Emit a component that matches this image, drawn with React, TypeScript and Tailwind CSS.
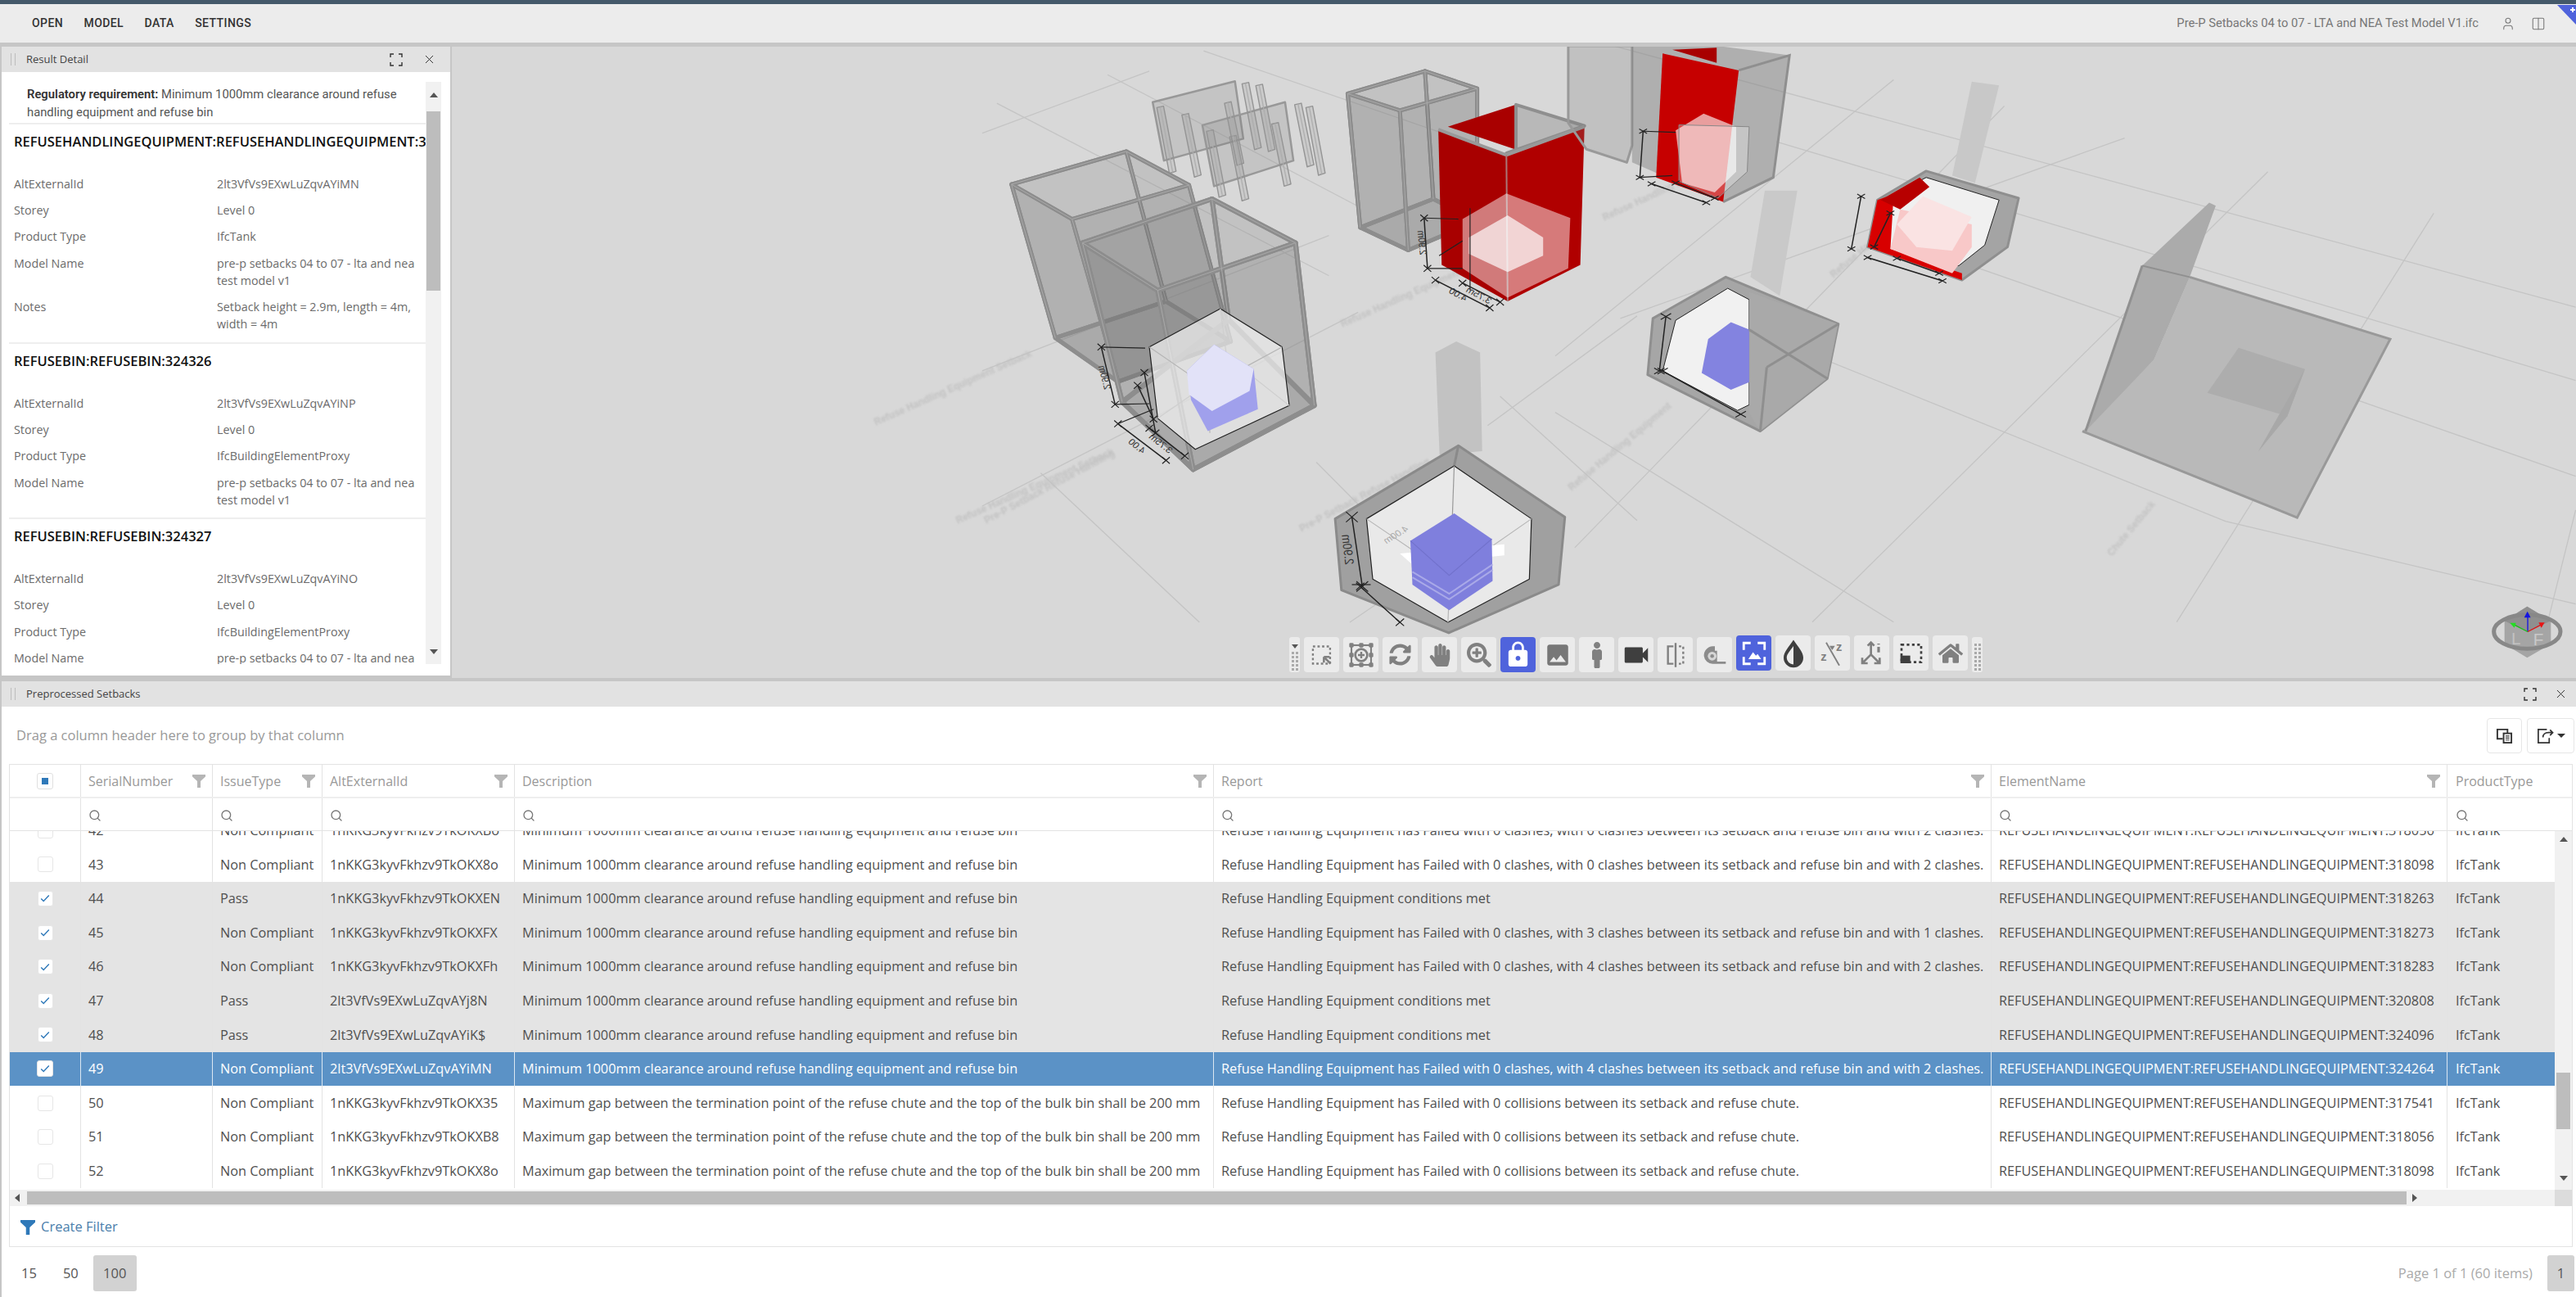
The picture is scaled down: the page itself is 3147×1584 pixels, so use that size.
import { Columns2, Search, User, X } from 'lucide-react'
import { FaHandPaper, FaHome, FaMale, FaSearchPlus, FaSyncAlt } from 'react-icons/fa'
import { MdLock, MdPhoto, MdVideocam } from 'react-icons/md'
import type { ReactNode } from 'react'

const OS = "font-['Open_Sans',sans-serif]"

const MIN_DESC = 'Minimum 1000mm clearance around refuse handling equipment and refuse bin'
const MAX_DESC =
  'Maximum gap between the termination point of the refuse chute and the top of the bulk bin shall be 200 mm'
const MET = 'Refuse Handling Equipment conditions met'
const COLLIDE = 'Refuse Handling Equipment has Failed with 0 collisions between its setback and refuse chute.'
const clash = (a: number, b: number) =>
  `Refuse Handling Equipment has Failed with 0 clashes, with ${a} clashes between its setback and refuse bin and with ${b} clashes.`
const ELEMENT = 'REFUSEHANDLINGEQUIPMENT:REFUSEHANDLINGEQUIPMENT:'

const rows = [
  { n: 42, t: 'Non Compliant', id: '1nKKG3kyvFkhzv9TkOKXBo', d: MIN_DESC, r: clash(0, 2), e: '318056' },
  { n: 43, t: 'Non Compliant', id: '1nKKG3kyvFkhzv9TkOKX8o', d: MIN_DESC, r: clash(0, 2), e: '318098' },
  { n: 44, t: 'Pass', id: '1nKKG3kyvFkhzv9TkOKXEN', d: MIN_DESC, r: MET, e: '318263', on: true },
  { n: 45, t: 'Non Compliant', id: '1nKKG3kyvFkhzv9TkOKXFX', d: MIN_DESC, r: clash(3, 1), e: '318273', on: true },
  { n: 46, t: 'Non Compliant', id: '1nKKG3kyvFkhzv9TkOKXFh', d: MIN_DESC, r: clash(4, 2), e: '318283', on: true },
  { n: 47, t: 'Pass', id: '2lt3VfVs9EXwLuZqvAYj8N', d: MIN_DESC, r: MET, e: '320808', on: true },
  { n: 48, t: 'Pass', id: '2lt3VfVs9EXwLuZqvAYiK$', d: MIN_DESC, r: MET, e: '324096', on: true },
  { n: 49, t: 'Non Compliant', id: '2lt3VfVs9EXwLuZqvAYiMN', d: MIN_DESC, r: clash(4, 2), e: '324264', on: true, sel: true },
  { n: 50, t: 'Non Compliant', id: '1nKKG3kyvFkhzv9TkOKX35', d: MAX_DESC, r: COLLIDE, e: '317541' },
  { n: 51, t: 'Non Compliant', id: '1nKKG3kyvFkhzv9TkOKXB8', d: MAX_DESC, r: COLLIDE, e: '318056' },
  { n: 52, t: 'Non Compliant', id: '1nKKG3kyvFkhzv9TkOKX8o', d: MAX_DESC, r: COLLIDE, e: '318098' },
]

const columns = [
  { name: 'SerialNumber', w: 'w-[161px]' },
  { name: 'IssueType', w: 'w-[134px]' },
  { name: 'AltExternalId', w: 'w-[235px]' },
  { name: 'Description', w: 'w-[854px]' },
  { name: 'Report', w: 'w-[950px]' },
  { name: 'ElementName', w: 'w-[557px]' },
]

const details = [
  {
    title: 'REFUSEHANDLINGEQUIPMENT:REFUSEHANDLINGEQUIPMENT:324264',
    rows: [
      ['AltExternalId', '2lt3VfVs9EXwLuZqvAYiMN'],
      ['Storey', 'Level 0'],
      ['Product Type', 'IfcTank'],
      ['Model Name', 'pre-p setbacks 04 to 07 - lta and nea test model v1'],
      ['Notes', 'Setback height = 2.9m, length = 4m, width = 4m'],
    ],
  },
  {
    title: 'REFUSEBIN:REFUSEBIN:324326',
    rows: [
      ['AltExternalId', '2lt3VfVs9EXwLuZqvAYiNP'],
      ['Storey', 'Level 0'],
      ['Product Type', 'IfcBuildingElementProxy'],
      ['Model Name', 'pre-p setbacks 04 to 07 - lta and nea test model v1'],
    ],
  },
  {
    title: 'REFUSEBIN:REFUSEBIN:324327',
    rows: [
      ['AltExternalId', '2lt3VfVs9EXwLuZqvAYiNO'],
      ['Storey', 'Level 0'],
      ['Product Type', 'IfcBuildingElementProxy'],
      ['Model Name', 'pre-p setbacks 04 to 07 - lta and nea test model v1'],
    ],
  },
]

function Corners({ className }: { className?: string }) {
  return (
    <svg viewBox="0 0 16 16" className={className} fill="none" stroke="#333" strokeWidth="1.4">
      <path d="M1 5V1h4M11 1h4v4M15 11v4h-4M5 15H1v-4" />
    </svg>
  )
}

function Funnel({ className, color = '#b5b5b5' }: { className?: string; color?: string }) {
  return (
    <svg viewBox="0 0 16 16" className={className}>
      <path d="M0 0h16v2.5L10 8v8H6V8L0 2.5z" fill={color} />
    </svg>
  )
}

function Grip() {
  return <div className="h-[15px] w-[6px] border-x border-[#bdbdbd]" />
}

function PanelHeader({ title, wide }: { title: string; wide?: boolean }) {
  return (
    <div className="flex h-[31px] shrink-0 items-center bg-[#e2e2e2] pl-[11px] text-[#444]">
      <Grip />
      <span className={`${OS} ml-[13px] text-[13px]`}>{title}</span>
      <Corners className="ml-auto h-[16px] w-[16px]" />
      <X className={`${wide ? 'mr-[10px] ml-[21px]' : 'mr-[17px] ml-[24px]'} h-[17px] w-[17px]`} strokeWidth={1.4} color="#333" />
    </div>
  )
}

function Arrow({ dir }: { dir: 'up' | 'down' | 'left' | 'right' }) {
  const points = { up: '0,6 5,0 10,6', down: '0,0 10,0 5,6', left: '6,0 6,10 0,5', right: '0,0 0,10 6,5' }[dir]
  return (
    <svg viewBox="0 0 10 10" className="h-[10px] w-[10px]">
      <polygon points={points} fill="#555" />
    </svg>
  )
}

function DetailPanel() {
  return (
    <div className="flex h-[768px] w-[548px] shrink-0 flex-col bg-white">
      <PanelHeader title="Result Detail" />
      <div className="flex min-h-0 flex-1 pt-[12px] pl-[9px]">
        <div className={`${OS} h-[711px] w-[509px] overflow-hidden text-[14.3px] text-[#6b6b6b]`}>
          <p className="pt-[4px] pr-[20px] pl-[22px] font-['Roboto',sans-serif] text-[14.8px] leading-[22px] text-[#555]">
            <b className="font-semibold text-[#333]">Regulatory requirement:</b> Minimum 1000mm clearance around refuse handling equipment and refuse bin
          </p>
          <div className="mt-[2px]">
            {details.map((d) => (
              <section key={d.title} className="border-t-2 border-[#eeeeee] pb-[6px] pl-[6px]">
                <h3 className="overflow-hidden pt-[10px] text-[16.5px] leading-[22px] font-semibold whitespace-nowrap text-[#111]">
                  {d.title}
                </h3>
                <div className="mt-[24px]">
                  {d.rows.map(([k, v]) => (
                    <div key={k} className="flex py-[5.7px] leading-[21px]">
                      <span className="w-[248px] shrink-0">{k}</span>
                      <span className="w-[245px]">{v}</span>
                    </div>
                  ))}
                </div>
              </section>
            ))}
          </div>
        </div>
        <div className="flex h-[711px] w-[19px] flex-col items-center bg-[#f1f1f1]">
          <div className="flex h-[36px] items-center">
            <Arrow dir="up" />
          </div>
          <div className="h-[219px] w-[17px] bg-[#bdbdbd]" />
          <div className="mt-auto flex h-[26px] items-center">
            <Arrow dir="down" />
          </div>
        </div>
      </div>
    </div>
  )
}

function AreaIcon() {
  return (
    <svg viewBox="0 0 24 24" className="h-[28px] w-[28px]" fill="none" stroke="#808080">
      <rect x="2.5" y="3" width="18" height="18" strokeWidth="2" strokeDasharray="2.4 2.4" />
      <path d="M14 14l7 7M14 14h6M14 14v6" strokeWidth="2.2" />
    </svg>
  )
}

function FitIcon() {
  return (
    <svg viewBox="0 0 24 24" className="h-[32px] w-[32px]" fill="none" stroke="#808080" strokeWidth="1.6">
      <rect x="3" y="3" width="18" height="18" />
      <circle cx="12" cy="12" r="5.5" strokeWidth="2" />
      <path d="M12 9v6M9 12h6" strokeWidth="1.8" />
      <g fill="#808080" stroke="none">
        <rect x="1" y="1" width="4" height="4" rx="1" />
        <rect x="10" y="1" width="4" height="4" rx="1" />
        <rect x="19" y="1" width="4" height="4" rx="1" />
        <rect x="1" y="10" width="4" height="4" rx="1" />
        <rect x="19" y="10" width="4" height="4" rx="1" />
        <rect x="1" y="19" width="4" height="4" rx="1" />
        <rect x="10" y="19" width="4" height="4" rx="1" />
        <rect x="19" y="19" width="4" height="4" rx="1" />
      </g>
    </svg>
  )
}

function CompareIcon() {
  return (
    <svg viewBox="0 0 24 24" className="h-[32px] w-[32px]" fill="none" stroke="#808080" strokeWidth="1.8">
      <path d="M10 4H5v16h5M12 1v22" />
      <path d="M15 4h4v16h-4" strokeDasharray="2.2 2.2" />
    </svg>
  )
}

function TapeIcon() {
  return (
    <svg viewBox="0 0 24 24" className="h-[32px] w-[32px]">
      <path d="M2 13a8.5 8.5 0 0 1 8-9h2v4h2v10h8v2H10a8 8 0 0 1-8-7z" fill="#8c8c8c" />
      <circle cx="9.5" cy="13" r="4" fill="#d6d6d6" />
      <circle cx="9.5" cy="13" r="1.7" fill="#8c8c8c" />
    </svg>
  )
}

function ExpandImageIcon() {
  return (
    <svg viewBox="0 0 24 24" className="h-[34px] w-[34px]" fill="none" stroke="#fff" strokeWidth="2">
      <path d="M9 3H3v6M15 3h6v6M21 15v6h-6M9 21H3v-6" />
      <path d="M7 17l4-6 2.5 3 1.5-1.5 3 4.5z" fill="#fff" stroke="none" />
    </svg>
  )
}

function DropIcon() {
  return (
    <svg viewBox="0 0 24 24" className="h-[36px] w-[36px]">
      <path d="M12 1c4 6 8 10 8 14.500a8 8 0 0 1-16 0C4 11 8 7 12 1z" fill="#3f3f3f" />
      <path d="M12 6c-2.500 3.500-5.500 6.500-5.500 9.500a5.500 5.500 0 0 0 5.500 5.500z" fill="#ebebeb" />
    </svg>
  )
}

function SleepIcon() {
  return (
    <svg viewBox="0 0 24 24" className="h-[32px] w-[32px]" fill="#808080" stroke="#808080">
      <path d="M6 2l12 21" strokeWidth="1.4" fill="none" />
      <text x="1" y="19" fontSize="11" fontWeight="700" fontFamily="Liberation Sans" stroke="none">z</text>
      <text x="15" y="10" fontSize="11" fontWeight="700" fontFamily="Liberation Sans" stroke="none">z</text>
      <polygon points="9,5 14,5 11.500,9" stroke="none" />
    </svg>
  )
}

function AxesIcon() {
  return (
    <svg viewBox="0 0 24 24" className="h-[32px] w-[32px]" fill="none" stroke="#808080" strokeWidth="2">
      <path d="M11 13V2M8 5l3-3 3 3M11 13l-8 8M3 16v5h5M11 13l8 8M19 16v5h-5" />
      <path d="M18 3v1M18 6v5" strokeWidth="2.4" />
    </svg>
  )
}

function DimIcon() {
  return (
    <svg viewBox="0 0 24 24" className="h-[32px] w-[32px]" fill="none">
      <rect x="3" y="4" width="18" height="16" stroke="#3f3f3f" strokeWidth="2" strokeDasharray="2.400 2.400" />
      <rect x="2" y="14" width="9" height="7" fill="#3f3f3f" />
    </svg>
  )
}

function ToolBtn({ children, active, lift }: { children: ReactNode; active?: boolean; lift?: boolean }) {
  return (
    <div
      className={`flex h-[43px] w-[43px] shrink-0 items-center justify-center rounded-[4px] ${
        active ? 'bg-[#4f63dc] text-white' : 'bg-[#ebebeb] text-[#808080]'
      } ${lift ? '-translate-y-[2px]' : ''}`}
    >
      {children}
    </div>
  )
}

function ToolGrip({ first }: { first?: boolean }) {
  return (
    <div className="flex h-[43px] w-[13px] shrink-0 flex-col items-center justify-end gap-[2px] rounded-[3px] bg-[#ebebeb] pb-[2px]">
      {first && <div className="mb-[2px] h-0 w-0 border-x-[4px] border-t-[5px] border-x-transparent border-t-[#555]" />}
      {Array.from({ length: first ? 5 : 7 }).map((_, i) => (
        <div key={i} className="flex gap-[2px]">
          <i className="h-[3px] w-[3px] bg-[#aaa]" />
          <i className="h-[3px] w-[3px] bg-[#aaa]" />
        </div>
      ))}
    </div>
  )
}

function Toolbar() {
  return (
    <div className="absolute top-[721px] left-[1023px] flex gap-[5px]">
      <ToolGrip first />
      <ToolBtn><AreaIcon /></ToolBtn>
      <ToolBtn><FitIcon /></ToolBtn>
      <ToolBtn><FaSyncAlt size={27} /></ToolBtn>
      <ToolBtn><FaHandPaper size={28} /></ToolBtn>
      <ToolBtn><FaSearchPlus size={30} /></ToolBtn>
      <ToolBtn active><MdLock size={35} /></ToolBtn>
      <ToolBtn><MdPhoto size={34} color="#777" /></ToolBtn>
      <ToolBtn><FaMale size={32} /></ToolBtn>
      <ToolBtn><MdVideocam size={38} color="#3f3f3f" /></ToolBtn>
      <ToolBtn><CompareIcon /></ToolBtn>
      <ToolBtn><TapeIcon /></ToolBtn>
      <ToolBtn active lift><ExpandImageIcon /></ToolBtn>
      <ToolBtn lift><DropIcon /></ToolBtn>
      <ToolBtn lift><SleepIcon /></ToolBtn>
      <ToolBtn lift><AxesIcon /></ToolBtn>
      <ToolBtn lift><DimIcon /></ToolBtn>
      <ToolBtn lift><FaHome size={30} /></ToolBtn>
      <ToolGrip />
    </div>
  )
}

// Polygon in whatever coordinates the parent <g> maps from.
function P({ d, f = 'none', s = 'none', w = 1 }: { d: string; f?: string; s?: string; w?: number }) {
  return <polygon points={d} fill={f} stroke={s} strokeWidth={w} strokeLinejoin="round" vectorEffect="non-scaling-stroke" />
}

function L({ d, s = '#222', w = 1.2 }: { d: string; s?: string; w?: number }) {
  return <polyline points={d} fill="none" stroke={s} strokeWidth={w} vectorEffect="non-scaling-stroke" />
}

// Dimension line with the little x marks at each end.
function Dim({ a, b, t = 9 }: { a: number[]; b: number[]; t?: number }) {
  const tick = (p: number[]) => `M${p[0] - t} ${p[1] - t}L${p[0] + t} ${p[1] + t}M${p[0] - t} ${p[1] + t}L${p[0] + t} ${p[1] - t}`
  return (
    <g>
      <L d={`${a.join(',')} ${b.join(',')}`} w={1.5} />
      <path d={`${tick(a)}${tick(b)}`} stroke="#222" strokeWidth={1.2} vectorEffect="non-scaling-stroke" />
    </g>
  )
}

// Dimension value, seen from behind in the model so it reads mirrored.
function DimText({ x, y, r, t, size = 24, fill = '#333' }: { x: number; y: number; r: number; t: string; size?: number; fill?: string }) {
  return (
    <text
      transform={`translate(${x} ${y}) rotate(${r}) scale(-1 1)`}
      fontSize={size}
      fontFamily="Liberation Sans"
      fill={fill}
      textAnchor="middle"
    >
      {t}
    </text>
  )
}

const GREY = 'rgba(112,112,112,0.3)'
const EDGE = '#8d8d8d'

function GreyBox({ t, b, w = 5 }: { t: number[][]; b: number[][]; w?: number }) {
  const str = (a: number[][]) => a.map((p) => p.join(',')).join(' ')
  return (
    <g>
      <P d={str(b)} f={GREY} />
      {t.map((p, i) => {
        const j = (i + 1) % 4
        return <P key={i} d={str([p, t[j], b[j], b[i]])} f="rgba(112,112,112,0.2)" s={EDGE} w={w} />
      })}
      <P d={str(t)} s={EDGE} w={w} />
      <P d={str(b)} s={EDGE} w={w} />
      {/* walls have thickness: a pale seam runs down the middle of each edge */}
      <P d={str(t)} s="#a9a9a9" w={1} />
      {t.map((p, i) => (
        <L key={i} d={`${p.join(',')} ${b[i].join(',')}`} s="#a9a9a9" w={1} />
      ))}
    </g>
  )
}

function Stick({ x, y, h, w = 16 }: { x: number; y: number; h: number; w?: number }) {
  return (
    <g>
      <P d={`${x},${y} ${x + w},${y - 4} ${x + w + 30},${y + h - 6} ${x + 30},${y + h}`} f="rgba(130,130,130,0.16)" s="#949494" w={1.4} />
      <L d={`${x + w * 0.5},${y - 2} ${x + w * 0.5 + 30},${y + h - 3}`} s="#adadad" />
    </g>
  )
}

const labels = [
  { x: 1070, y: 520, r: -24, t: 'Refuse Handling Equipment Setback' },
  { x: 1640, y: 400, r: -24, t: 'Refuse Handling Equipment Setback' },
  { x: 1170, y: 640, r: -24, t: 'Refuse Handling Equipment Setback' },
  { x: 1205, y: 640, r: -28, t: 'Pre-P Setback Refuse Handling' },
  { x: 1590, y: 650, r: -28, t: 'Pre-P Setback Refuse Handling' },
  { x: 1920, y: 600, r: -40, t: 'Refuse Handling Equipment' },
  { x: 2240, y: 340, r: -40, t: 'Refuse Handling Equipment' },
  { x: 2580, y: 680, r: -50, t: 'Chute Setback' },
  { x: 1960, y: 270, r: -25, t: 'Refuse Handling Equipment' },
]

function Scene() {
  return (
    <svg viewBox="552 57 2595 771" preserveAspectRatio="none" className="absolute inset-0 h-full w-full">
      {/* right half of the model, traced in 1247x720 crop coordinates */}
      <g transform="translate(1900 40) scale(0.795 0.459)">
        {[
          '90,35 1568,730', '340,290 1568,925', '640,620 1568,1180', '300,790 1030,1300 1568,1520', '0,1010 520,1568',
          '0,860 520,125', '100,760 875,280', '395,1568 1095,370', '955,1568 1350,480', '1525,1568 1568,1270', '30,1370 690,195',
        ].map((d) => (
          <L key={d} d={d} s="#c4c4c4" w={1.3} />
        ))}
      </g>
      <g transform="translate(1200 60) scale(0.5102 0.4464)">
        {[
          '35,148 830,620', '300,70 900,430', '530,5 1230,280', '0,230 400,60', '0,880 830,510', '0,1250 900,720',
          '140,1160 520,1568', '800,1130 1180,1568', '1300,1240 880,1568', '1568,730 1210,1030', '1240,950 1568,1290',
        ].map((d) => (
          <L key={d} d={d} s="#c4c4c4" w={1.3} />
        ))}
      </g>

      {labels.map((l, i) => (
        <text
          key={i}
          x={l.x}
          y={l.y}
          transform={`rotate(${l.r} ${l.x} ${l.y})`}
          fontSize="12"
          fontFamily="Liberation Sans"
          fontWeight="700"
          fill="#c2c2c2"
          className="blur-[1px]"
        >
          {l.t}
        </text>
      ))}

      <g transform="translate(1200 60) scale(0.5102 0.4464)">
        {/* fence panels and posts */}
        <P d="408,145 605,88 625,245 435,305" f="rgba(120,120,120,0.2)" s="#989898" w={2.5} />
        <P d="527,208 725,145 745,305 555,375" f="rgba(120,120,120,0.2)" s="#989898" w={2.5} />
        <Stick x={418} y={160} h={180} />
        <Stick x={478} y={180} h={170} />
        <Stick x={580} y={148} h={170} />
        <Stick x={622} y={95} h={180} />
        <Stick x={655} y={100} h={180} />
        <Stick x={537} y={225} h={180} />
        <Stick x={592} y={240} h={175} />
        <Stick x={693} y={205} h={170} />
        <Stick x={748} y={152} h={170} />
        <Stick x={775} y={160} h={185} />

        <GreyBox t={[[70, 370], [345, 280], [495, 372], [215, 465]]} b={[[175, 790], [440, 690], [595, 800], [325, 910]]} w={5} />
        <GreyBox t={[[240, 530], [550, 410], [750, 530], [420, 660]]} b={[[335, 965], [590, 740], [795, 975], [505, 1150]]} w={6} />

        {/* white setback cage */}
        <P d="400,815 570,710 718,815 735,975 510,1095 420,1010" f="rgba(255,255,255,0.62)" s="#222" w={1.2} />
        <L d="400,815 540,925 718,815" s="#b5b5b5" />
        <L d="570,710 585,840 735,975" s="#cfcfcf" />
        <L d="420,1010 585,880" s="#cfcfcf" />
        <L d="540,925 545,1050" s="#b5b5b5" />
        <P d="490,880 555,808 650,875 660,985 540,1045 500,960" f="#a0a0ec" />
        <P d="490,880 555,808 650,875 640,935 550,990 495,945" f="#e2e2f8" />
        <L d="285,815 390,818" />
        <L d="318,972 400,970" />
        <Dim a={[285, 815]} b={[318, 972]} />
        <Dim a={[325, 1025]} b={[440, 1125]} />
        <Dim a={[400, 1037]} b={[485, 1113]} />
        <Dim a={[388, 885]} b={[415, 1050]} />
        <Dim a={[372, 920]} b={[410, 1012]} />
        <L d="325,1025 410,985" />
        <DimText x={285} y={900} r={77} t="2.90m" />
        <DimText x={365} y={1092} r={42} t="4.00" />
        <DimText x={422} y={1085} r={42} t="3.75m" />

        {/* plain box and red box */}
        <GreyBox t={[[875, 122], [1060, 60], [1185, 108], [1000, 168]]} b={[[905, 488], [1080, 410], [1185, 470], [1020, 550]]} w={5} />
        <P d="1115,212 1278,152 1278,275" f="#a90000" />
        <P d="1278,152 1442,210 1255,285 1278,275" f="#b8b8b8" s="#8f8f8f" w={4} />
        <P d="1092,220 1255,290 1258,690 1100,590" f="#a80000" />
        <P d="1255,290 1442,212 1432,590 1258,690" f="#b00000" />
        <L d="1092,220 1255,290 1442,212" s="#999" w={4} />
        <L d="1255,290 1258,690" s="#a77" w={2} />
        <P d="1255,395 1408,462 1403,600 1258,680 1150,600 1150,465" f="rgba(255,255,255,0.48)" />
        <P d="1258,455 1343,515 1343,565 1258,610 1165,560 1165,515" f="rgba(255,255,255,0.68)" />
        <L d="1168,435 1168,660" />
        <L d="1058,462 1140,465" />
        <L d="1066,600 1150,600" />
        <Dim a={[1058, 462]} b={[1066, 600]} />
        <Dim a={[1085, 632]} b={[1215, 708]} />
        <Dim a={[1150, 640]} b={[1240, 692]} />
        <L d="1094,565 1150,525" />
        <DimText x={1045} y={530} r={85} t="2.90m" />
        <DimText x={1135} y={678} r={32} t="4.00" />
        <DimText x={1185} y={680} r={32} t="3.75m" />

        {/* front cage */}
        <P d="1085,830 1135,800 1192,830 1197,1100 1095,1110" f="#c2c2c2" />
        <P d="1140,1085 1395,1280 1380,1465 1117,1597 860,1480 845,1285" f="#a0a0a0" s="#8a8a8a" w={3} />
        <L d="1140,1085 1130,1140" s="#8a8a8a" w={3} />
        <P d="1130,1140 1315,1285 1310,1450 1115,1568 935,1450 920,1285" f="#e9e9e9" s="#222" w={1.2} />
        <L d="1130,1140 1125,1300" s="#999" />
        <L d="920,1285 1120,1440 1315,1285" s="#b5b5b5" />
        <L d="1120,1440 1115,1568" s="#b5b5b5" />
        <P d="1000,1380 1250,1355 1250,1385 1030,1410" f="#fff" />
        <P d="1130,1270 1220,1340 1222,1455 1118,1535 1030,1465 1025,1345" f="#7f7fdd" />
        <L d="1025,1345 1118,1440 1220,1340" s="#7272cc" />
        <L d="1030,1430 1118,1490 1222,1410" s="#a9a9e8" w={2} />
        <L d="1030,1445 1118,1505 1222,1425" s="#a9a9e8" w={2} />
        <Dim a={[885, 1280]} b={[910, 1470]} t={14} />
        <Dim a={[905, 1470]} b={[1000, 1568]} t={10} />
        <L d="885,1465 930,1465" />
        <DimText x={865} y={1370} r={84} t="2.90m" size={30} />
        <DimText x={995} y={1335} r={-35} t="4.00m" size={24} fill="#aaa" />
      </g>

      <g transform="translate(1900 40) scale(0.795 0.459)">
        <P d="20,35 118,35 118,300 110,345 48,310 20,240" f="rgba(120,120,120,0.24)" s="#999" w={3} />
        <P d="118,35 250,35 360,60 335,385 258,450 118,345" f="rgba(120,120,120,0.42)" />
        <L d="282,100 360,60 335,385 258,450" s="#8f8f8f" w={3} />
        <P d="165,55 282,100 258,450 155,385" f="#c60000" />
        <P d="180,45 248,40 248,80" f="#a80000" />
        <P d="228,215 278,250 278,370 245,425 195,400 185,260" f="rgba(255,255,255,0.62)" />
        <P d="190,245 298,250 295,370 250,440 190,395" f="rgba(255,255,255,0.28)" s="#888" />
        <L d="135,262 185,265" />
        <L d="130,385 180,380" />
        <Dim a={[135, 262]} b={[130, 385]} t={6} />
        <Dim a={[148, 402]} b={[232, 452]} t={6} />
        <Dim a={[185, 400]} b={[245, 440]} t={6} />

        <P d="640,130 682,140 645,400 610,380" f="#c8c8c8" />
        <P d="322,420 372,420 345,700 300,650" f="#c9c9c9" />

        <P d="570,368 712,440 695,570 625,658 480,570 495,445" f="#a4a4a4" s="#8f8f8f" w={3} />
        <P d="570,385 682,445 660,565 620,620 495,570 505,445" f="#f0f0f0" s="#222" />
        <P d="495,445 520,430 515,575 625,640 625,658 480,570" f="#d80000" />
        <P d="500,445 560,385 575,410 530,470" f="#b70000" />
        <P d="530,470 640,510 640,570 610,640 515,575" f="#f8c8c8" />
        <P d="565,435 640,490 610,580 555,570 525,510" f="#fae3e3" />
        <Dim a={[470, 435]} b={[455, 575]} t={6} />
        <Dim a={[480, 598]} b={[595, 660]} t={6} />
        <Dim a={[515, 480]} b={[490, 570]} t={6} />
        <Dim a={[525, 600]} b={[590, 640]} t={6} />

        <P d="262,650 435,775 418,920 315,1060 142,910 150,760" f="#a6a6a6" s="#8f8f8f" w={3} />
        <P d="265,680 298,710 298,990 280,1005 165,900 185,765" f="#f1f1f1" s="#222" />
        <P d="270,770 298,790 298,930 270,950 225,905 235,815" f="#8383e0" />
        <P d="298,690 435,775 418,920 315,1060 298,1010" f="rgba(170,170,170,0.9)" />
        <L d="325,890 435,775" s="#8f8f8f" w={3} />
        <L d="325,890 315,1060" s="#8f8f8f" w={3} />
        <L d="298,790 418,920" s="#8f8f8f" w={3} />
        <Dim a={[170, 755]} b={[160, 900]} t={8} />
        <Dim a={[165, 900]} b={[285, 1015]} t={8} />

        {/* angled slab */}
        <P d="975,650 1283,815 1140,1290 810,1060 920,870" f="#b9b9b9" />
        <L d="975,650 1283,815 1140,1290 810,1060" s="#999" w={3} />
        <P d="902,620 1005,452 1015,460 975,650 920,870 815,1060" f="#ababab" />
        <L d="902,620 815,1060" s="#909090" w={3} />
        <L d="902,620 975,650" s="#909090" w={2} />
        <P d="1050,838 1152,895 1125,1020 1002,958" f="#adadad" />
        <P d="1152,895 1080,1115 1125,1020" f="#a8a8a8" />
      </g>
    </svg>
  )
}

function Gizmo() {
  return (
    <svg viewBox="1030 50 270 200" className="absolute top-[681px] left-[2491px] h-[67px] w-[90px]">
      <polygon points="1163,58 1250,110 1250,195 1163,245 1080,195 1080,110" fill="#a5a5a5" />
      <polygon points="1163,58 1250,110 1163,150 1080,110" fill="#8f8f8f" />
      <ellipse cx="1163" cy="150" rx="122" ry="62" fill="none" stroke="#888" strokeWidth="15" />
      <text x="1105" y="195" fontSize="62" fontFamily="Liberation Sans" fill="#c2c2c2">L</text>
      <text x="1185" y="198" fontSize="62" fontFamily="Liberation Sans" fill="#c9c9c9">F</text>
      <path d="M1165 150V90" stroke="#1414e0" strokeWidth="4" />
      <path d="M1152 98l12-22 12 22z" fill="#1414e0" />
      <path d="M1165 150l50-26" stroke="#e01414" strokeWidth="4" />
      <path d="M1205 116l22 0-12 20z" fill="#e81414" />
      <path d="M1165 150l-50-26" stroke="#18c018" strokeWidth="4" />
      <path d="M1100 118l22 0-6 18z" fill="#22e022" />
    </svg>
  )
}

function Check({ on, large }: { on?: boolean; large?: boolean }) {
  return (
    <div
      className={`flex items-center justify-center rounded-[3px] border bg-white ${
        large ? 'h-[20px] w-[20px] border-[#e4e4e4]' : 'h-[19px] w-[19px] border-[#e6e6e6]'
      }`}
    >
      {on && (
        <svg viewBox="0 0 16 16" className="h-[14px] w-[14px]" fill="none" stroke="#2f79b9" strokeWidth="1.6">
          <path d="M2.500 8.500l3.500 3.500 7.500-8" />
        </svg>
      )}
    </div>
  )
}

function CopyIcon() {
  return (
    <svg viewBox="0 0 22 22" className="h-[21px] w-[21px]" fill="none" stroke="#333" strokeWidth="2">
      <path d="M9 15H2V3h13v5" />
      <rect x="10" y="8" width="10" height="12" />
      <path d="M12.500 11.500h5M12.500 14h5M12.500 16.500h5" strokeWidth="1.3" />
    </svg>
  )
}

function ExportIcon() {
  return (
    <svg viewBox="0 0 22 22" className="h-[21px] w-[21px]" fill="none" stroke="#333" strokeWidth="1.800">
      <path d="M13 3H2v17h14v-6" />
      <path d="M8 13c0-4 3-6 7-6h5M17 3.500L20.500 7 17 10.500" />
    </svg>
  )
}

function DataTable() {
  const cell = 'flex shrink-0 items-center overflow-hidden whitespace-nowrap border-r pl-[9px]'
  return (
    <div className={`${OS} ml-[9px] w-[3132px] border border-[#e3e3e3] text-[16.3px]`}>
      <div className="flex h-[41px] border-b-2 border-[#eeeeee] text-[16px] text-[#999]">
        <div className="flex w-[87px] shrink-0 items-center justify-center border-r border-[#e3e3e3]">
          <div className="flex h-[20px] w-[20px] items-center justify-center rounded-[3px] border border-[#e0e0e0]">
            <div className="h-[8px] w-[8px] bg-[#2f79b9]" />
          </div>
        </div>
        {columns.map((c) => (
          <div key={c.name} className={`${cell} ${c.w} border-[#e3e3e3]`}>
            <span>{c.name}</span>
            <Funnel className="mr-[8px] ml-auto h-[16px] w-[16px] shrink-0" />
          </div>
        ))}
        <div className="flex flex-1 items-center pl-[10px]">ProductType</div>
      </div>
      <div className="flex h-[40px] border-b border-[#e3e3e3]">
        <div className="w-[87px] shrink-0 border-r border-[#e3e3e3]" />
        {columns.map((c) => (
          <div key={c.name} className={`${cell} ${c.w} border-[#e3e3e3] pt-[2px]`}>
            <Search className="h-[16px] w-[16px]" color="#777" strokeWidth={2} />
          </div>
        ))}
        <div className="flex flex-1 items-center pt-[2px] pl-[10px]">
          <Search className="h-[16px] w-[16px]" color="#777" strokeWidth={2} />
        </div>
      </div>
      <div className="flex h-[438px]">
        <div className="w-[3111px] overflow-hidden">
          <div className="-mt-[21.5px]">
            {rows.map((r) => (
              <div
                key={r.n}
                className={`flex h-[41.6px] ${
                  r.sel ? 'bg-[#5b92c6] text-white' : r.on ? 'bg-[#e4e4e4] text-[#505050]' : 'bg-white text-[#505050]'
                }`}
              >
                <div className={`flex w-[87px] shrink-0 items-center justify-center border-r ${r.sel ? 'border-[#dbe7f2]' : 'border-[#e3e3e3]'}`}>
                  <Check on={r.on} large={r.sel} />
                </div>
                {[r.n, r.t, r.id, r.d, r.r, ELEMENT + r.e].map((v, i) => (
                  <div key={i} className={`${cell} ${columns[i].w} ${r.sel ? 'border-[#dbe7f2]' : 'border-[#e3e3e3]'}`}>
                    {v}
                  </div>
                ))}
                <div className="flex flex-1 items-center pl-[10px]">IfcTank</div>
              </div>
            ))}
          </div>
        </div>
        <div className="flex w-[21px] flex-col items-center bg-[#f1f1f1]">
          <div className="flex h-[24px] items-center">
            <Arrow dir="up" />
          </div>
          <div className="mt-[271px] h-[69px] w-[17px] bg-[#bdbdbd]" />
          <div className="mt-auto flex h-[24px] items-center">
            <Arrow dir="down" />
          </div>
        </div>
      </div>
      <div className="flex h-[20px] bg-[#f1f1f1]">
        <div className="flex w-[21px] items-center justify-center">
          <Arrow dir="left" />
        </div>
        <div className="my-[2px] w-[2907px] bg-[#bdbdbd]" />
        <div className="ml-auto flex w-[24px] items-center justify-center">
          <Arrow dir="right" />
        </div>
        <div className="ml-[157px] w-[21px] bg-[#dcdcdc]" />
      </div>
      <div className="flex h-[49px] items-center gap-[7px] pt-[2px] pl-[13px] text-[16.5px] text-[#4a7eab]">
        <Funnel className="h-[18px] w-[18px]" color="#2f79b9" />
        <span>Create Filter</span>
      </div>
    </div>
  )
}

export default function App() {
  return (
    <div className={`${OS} flex h-[1584px] w-[3147px] flex-col overflow-hidden bg-white`}>
      <div className="h-[5px] shrink-0 bg-[#44596a]" />
      <div className="relative flex h-[47px] shrink-0 items-center bg-[#ececec] pl-[39px] font-['Roboto',sans-serif]">
        <nav className="flex gap-[25.500px] text-[14px] font-medium tracking-[0.4px] text-[#333]">
          <span>OPEN</span>
          <span>MODEL</span>
          <span>DATA</span>
          <span>SETTINGS</span>
        </nav>
        <span className="ml-auto text-[14.7px] text-[#777]">Pre-P Setbacks 04 to 07 - LTA and NEA Test Model V1.ifc</span>
        <User className="ml-[27px] h-[18px] w-[18px]" color="#777" strokeWidth={1.4} />
        <Columns2 className="mr-[37px] ml-[19px] h-[18px] w-[18px]" color="#777" strokeWidth={1.4} />
        <svg viewBox="0 0 23 24" className="absolute top-[1px] right-0 h-[24px] w-[23px]">
          <polygon points="0,0 23,0 23,24" fill="#4f63dc" />
          <path d="M19 3v6M16 6h6" stroke="#fff" strokeWidth="2" />
        </svg>
      </div>
      <div className="h-[5px] shrink-0 bg-[#c6c6c6]" />

      <div className="flex h-[775px] shrink-0 bg-[#c6c6c6] pl-[2px]">
        <DetailPanel />
        <div className="relative ml-[2px] h-[771px] w-[2595px] overflow-hidden bg-[#d8d8d8]">
          <Scene />
          <Toolbar />
          <Gizmo />
        </div>
      </div>

      <div className="flex min-h-0 flex-1 flex-col border-l-2 border-[#c6c6c6]">
        <PanelHeader title="Preprocessed Setbacks" wide />
        <div className="flex h-[70px] shrink-0 items-center pr-[2px] pl-[18px]">
          <span className="text-[16.5px] text-[#999]">Drag a column header here to group by that column</span>
          <div className="ml-auto flex h-[43px] w-[43px] items-center justify-center rounded-[4px] border border-[#e6e6e6]">
            <CopyIcon />
          </div>
          <div className="ml-[6px] flex h-[43px] w-[58px] items-center justify-center gap-[4px] rounded-[4px] border border-[#e6e6e6]">
            <ExportIcon />
            <div className="h-0 w-0 border-x-[5px] border-t-[5px] border-x-transparent border-t-[#333]" />
          </div>
        </div>
        <DataTable />
        <div className="mt-[10px] flex h-[44px] items-center text-[16.5px] text-[#555]">
          <span className="ml-[24px]">15</span>
          <span className="ml-[32px]">50</span>
          <span className="ml-[18px] flex h-[44px] w-[53px] items-center justify-center rounded-[3px] bg-[#d2d2d2]">100</span>
          <span className="ml-auto text-[#aaa]">Page 1 of 1 (60 items)</span>
          <span className="mr-[2px] ml-[18px] flex h-[44px] w-[33px] items-center justify-center rounded-[3px] bg-[#d2d2d2]">1</span>
        </div>
      </div>
    </div>
  )
}
